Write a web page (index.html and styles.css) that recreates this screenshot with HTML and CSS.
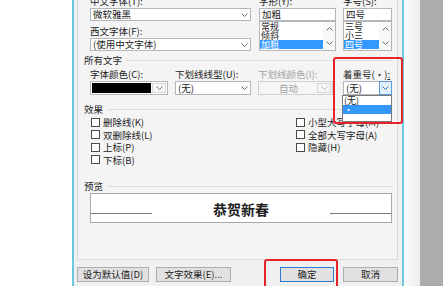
FILE: index.html
```html
<!DOCTYPE html>
<html lang="zh-CN">
<head>
  <meta charset="UTF-8" />
  <meta name="viewport" content="width=device-width, initial-scale=1.0"/>
  <title>字体</title>
  <link rel="stylesheet" href="styles.css">
</head>
<body>
  <div class="screen">
    <div class="doc"></div>

    <div class="dialog">
      <div class="page">
        <div class="fonts">
          <div class="col">
            <div class="lbl">中文字体(T):</div>
            <div class="combo combo-wide">
              <span class="val">微软雅黑</span>
              <span class="arrow"><svg width="7" height="4" viewBox="0 0 7 4"><polyline points="0.5,0.5 3.5,3.5 6.5,0.5"/></svg></span>
            </div>
            <div class="lbl lbl-second">西文字体(F):</div>
            <div class="combo combo-wide">
              <span class="val">(使用中文字体)</span>
              <span class="arrow"><svg width="7" height="4" viewBox="0 0 7 4"><polyline points="0.5,0.5 3.5,3.5 6.5,0.5"/></svg></span>
            </div>
          </div>

          <div class="col">
            <div class="lbl">字形(Y):</div>
            <div class="field field-style">加粗</div>
            <div class="listbox field-style">
              <div class="items">
                <div class="item">常规</div>
                <div class="item">倾斜</div>
                <div class="item selected">加粗</div>
              </div>
              <div class="scroll">
                <svg width="7" height="4" viewBox="0 0 7 4"><polyline points="0.5,3.5 3.5,0.5 6.5,3.5"/></svg>
                <svg width="7" height="4" viewBox="0 0 7 4"><polyline points="0.5,0.5 3.5,3.5 6.5,0.5"/></svg>
              </div>
            </div>
          </div>

          <div class="col">
            <div class="lbl">字号(S):</div>
            <div class="field field-size">四号</div>
            <div class="listbox field-size">
              <div class="items">
                <div class="item">三号</div>
                <div class="item">小三</div>
                <div class="item selected">四号</div>
              </div>
              <div class="scroll">
                <svg width="7" height="4" viewBox="0 0 7 4"><polyline points="0.5,3.5 3.5,0.5 6.5,3.5"/></svg>
                <svg width="7" height="4" viewBox="0 0 7 4"><polyline points="0.5,0.5 3.5,3.5 6.5,0.5"/></svg>
              </div>
            </div>
          </div>
        </div>

        <div class="group-title group-all">所有文字</div>
        <div class="color-row">
          <div class="col">
            <div class="lbl">字体颜色(C):</div>
            <div class="combo combo-tall combo-color">
              <span class="swatch"></span>
              <span class="arrow arrow-box"><svg width="7" height="4" viewBox="0 0 7 4"><polyline points="0.5,0.5 3.5,3.5 6.5,0.5"/></svg></span>
            </div>
          </div>
          <div class="col">
            <div class="lbl">下划线线型(U):</div>
            <div class="combo combo-tall combo-line">
              <span class="val">(无)</span>
              <span class="arrow"><svg width="7" height="4" viewBox="0 0 7 4"><polyline points="0.5,0.5 3.5,3.5 6.5,0.5"/></svg></span>
            </div>
          </div>
          <div class="col">
            <div class="lbl lbl-off">下划线颜色(I):</div>
            <div class="combo combo-tall combo-off">
              <span class="val val-center">自动</span>
              <span class="arrow arrow-box"><svg width="7" height="4" viewBox="0 0 7 4"><polyline points="0.5,0.5 3.5,3.5 6.5,0.5"/></svg></span>
            </div>
          </div>
          <div class="col">
            <div class="lbl">着重号(·)<u>:</u></div>
            <div class="combo combo-tall combo-emph">
              <span class="val">(无)</span>
              <span class="arrow arrow-hot"><svg width="7" height="4" viewBox="0 0 7 4"><polyline points="0.5,0.5 3.5,3.5 6.5,0.5"/></svg></span>
            </div>
          </div>
        </div>

        <div class="group-title group-fx">效果</div>
        <div class="effects">
          <div class="checks">
            <div class="check"><span class="box"></span>删除线(K)</div>
            <div class="check"><span class="box"></span>双删除线(L)</div>
            <div class="check"><span class="box"></span>上标(P)</div>
            <div class="check"><span class="box"></span>下标(B)</div>
          </div>
          <div class="checks">
            <div class="check"><span class="box"></span>小型大写字母(M)</div>
            <div class="check"><span class="box"></span>全部大写字母(A)</div>
            <div class="check"><span class="box"></span>隐藏(H)</div>
          </div>
        </div>

        <div class="group-title group-preview">预览</div>
        <div class="preview">
          <span class="base"></span>
          <span class="sample">恭贺新春</span>
          <span class="base"></span>
        </div>
      </div>

      <div class="buttons">
        <button class="btn btn-default">设为默认值(D)</button>
        <button class="btn btn-effects">文字效果(E)...</button>
        <button class="btn btn-ok">确定</button>
        <button class="btn btn-cancel">取消</button>
      </div>
    </div>

    <div class="edge"></div>
    <div class="shade"></div>

    <div class="dropdown">
      <div class="opt">(无)</div>
      <div class="opt selected">·</div>
    </div>
    <div class="mark mark-emph"></div>
    <div class="mark mark-ok"></div>
  </div>
</body>
</html>
```

FILE: styles.css
```css
* {
  margin: 0;
  padding: 0;
  box-sizing: border-box;
}
body {
  font-family: "Noto Sans CJK SC", "Noto Sans", sans-serif;
  font-size: 9.5px;
  color: #222;
  background: #fff;
  overflow: hidden;
}
.screen {
  position: relative;
  display: flex;
  width: 443px;
  height: 286px;
  overflow: hidden;
}
.doc {
  width: 72px;
  background: #fff;
}
.dialog {
  width: 332px;
  border-left: 2px solid #6cc6dc;
  border-right: 2px solid #6cc6dc;
  background: #f0f0f0;
}
.edge {
  width: 16px;
  background: linear-gradient(to right, #fdfdfd, #ececec);
}
.shade {
  flex: 1;
  background: #acacac;
}

/* tab page */
.page {
  margin: 0 4px 0 3px;
  border: 1px solid #d9d9d9;
  border-top: 0;
  padding: 0 4px 36px 6px;
  background: #f4f4f4;
}
.lbl {
  height: 12px;
  line-height: 12px;
  margin-bottom: 1px;
  white-space: nowrap;
}
.lbl-second {
  margin-top: 4px;
}
.lbl-off {
  color: #a3a3a3;
}
.lbl u {
  text-decoration: underline;
}

.fonts {
  display: grid;
  grid-template-columns: 169px 84px 49px;
  margin-top: -5px;
  padding-left: 6px;
}
.combo {
  display: flex;
  height: 13px;
  border: 1px solid #b4b6bb;
  background: #fff;
}
.combo-wide {
  width: 161px;
}
.combo-tall {
  height: 14px;
}
.val {
  flex: 1;
  padding-left: 2px;
  line-height: 11px;
  white-space: nowrap;
  overflow: hidden;
}
.combo-tall .val {
  line-height: 12px;
}
.val-center {
  text-align: center;
  color: #a3a3a3;
}
.arrow {
  width: 11px;
  display: flex;
  align-items: center;
  justify-content: center;
}
.arrow svg,
.scroll svg {
  fill: none;
  stroke: #6d6d6d;
  stroke-width: 1;
}
.arrow-box {
  width: 14px;
  margin: 1px;
  border: 1px solid #d6d6d6;
  background: #f6f6f6;
}
.arrow-hot {
  width: 13px;
  margin: -1px -1px -1px 0;
  border: 1px solid #5a9be0;
  background: #e3effb;
}
.arrow-hot svg {
  stroke: #2f6ea8;
}

.field {
  height: 13px;
  border: 1px solid #b4b6bb;
  background: #fff;
  padding-left: 2px;
  line-height: 11px;
}
.field-style {
  width: 77px;
}
.field-size {
  width: 49px;
}
.listbox {
  display: flex;
  height: 30px;
  border: 1px solid #b4b6bb;
  background: #fff;
}
.items {
  flex: 1;
  overflow: hidden;
}
.item {
  height: 9px;
  line-height: 9px;
  font-size: 9px;
  padding-left: 1px;
  white-space: nowrap;
}
.selected {
  background: #3399ff;
  color: #fff;
}
.scroll {
  width: 12px;
  display: flex;
  flex-direction: column;
  justify-content: space-between;
  align-items: center;
  padding: 5px 0;
  background: #f8f8f8;
}

/* section headings */
.group-title {
  display: flex;
  align-items: center;
  height: 12px;
  line-height: 12px;
}
.group-title::after {
  content: "";
  flex: 1;
  margin-left: 5px;
  border-top: 1px solid #dcdcdc;
}
.group-all {
  margin-top: 3px;
}
.group-fx {
  margin-top: 8px;
}
.group-preview {
  margin-top: 14px;
}

.color-row {
  display: grid;
  grid-template-columns: 85px 83px 85px 49px;
  margin-top: 2px;
  padding-left: 6px;
}
.combo-color {
  width: 78px;
}
.swatch {
  flex: 1;
  margin: 1px 0 1px 1px;
  background: #000;
}
.combo-line {
  width: 76px;
}
.combo-off {
  width: 75px;
  border-color: #d0d0d0;
  background: #f6f6f6;
}
.combo-off .arrow-box svg {
  stroke: #b5b5b5;
}
.combo-emph {
  width: 49px;
}

.effects {
  display: grid;
  grid-template-columns: 205px 1fr;
  margin-top: 1px;
  padding-left: 7px;
}
.check {
  display: flex;
  align-items: center;
  height: 12.5px;
  white-space: nowrap;
}
.box {
  width: 9px;
  height: 9px;
  margin-right: 3px;
  border: 1px solid #4a4a4a;
  background: #fff;
}

.preview {
  display: flex;
  justify-content: space-between;
  align-items: flex-start;
  width: 302px;
  height: 30px;
  margin: 1px 0 0 6px;
  padding: 7px 0 0;
  border: 1px solid #a8a8a8;
  background: #fff;
}
.base {
  width: 61px;
  height: 1px;
  margin-top: 12px;
  background: #7a7a7a;
}
.sample {
  font-size: 14px;
  line-height: 16px;
  font-weight: 700;
  color: #1e1e1e;
}

/* buttons */
.buttons {
  display: flex;
  margin: 7px 4px 0 3px;
}
.btn {
  height: 15px;
  border: 1px solid #adadad;
  background: #e1e1e1;
  font-family: inherit;
  font-size: 9.5px;
  line-height: 13px;
  color: #222;
  text-align: center;
}
.btn-default {
  width: 72px;
}
.btn-effects {
  width: 75px;
  margin-left: 7px;
}
.btn-ok {
  width: 54px;
  margin-left: auto;
  border-color: #2b7bd0;
}
.btn-cancel {
  width: 55px;
  margin-left: 9px;
}

/* open emphasis list */
.dropdown {
  position: absolute;
  left: 342px;
  top: 95px;
  width: 50px;
  height: 27px;
  border: 1px solid #7a7a7a;
  background: #fff;
}
.opt {
  height: 9px;
  line-height: 9px;
  font-size: 9px;
  padding-left: 1px;
}

/* red annotation frames */
.mark {
  position: absolute;
  border: 2px solid #e5232a;
  border-radius: 3px;
}
.mark-emph {
  left: 333px;
  top: 57px;
  width: 70px;
  height: 67px;
}
.mark-ok {
  left: 264px;
  top: 259px;
  width: 74px;
  height: 40px;
}
```
